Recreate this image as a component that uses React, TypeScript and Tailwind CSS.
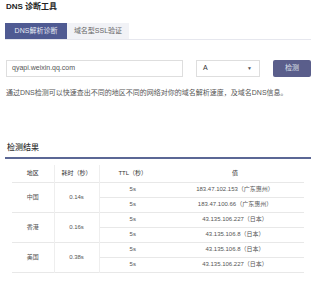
import React from 'react';

type Row = { region: string; time: string; records: { ttl: string; value: string }[] };

const rows: Row[] = [
  {
    region: '中国',
    time: '0.14s',
    records: [
      { ttl: '5s', value: '183.47.102.153（广东惠州）' },
      { ttl: '5s', value: '183.47.100.66（广东惠州）' },
    ],
  },
  {
    region: '香港',
    time: '0.16s',
    records: [
      { ttl: '5s', value: '43.135.106.227（日本）' },
      { ttl: '5s', value: '43.135.106.8（日本）' },
    ],
  },
  {
    region: '美国',
    time: '0.38s',
    records: [
      { ttl: '5s', value: '43.135.106.8（日本）' },
      { ttl: '5s', value: '43.135.106.227（日本）' },
    ],
  },
];

const App: React.FC = () => {
  return (
    <div className="w-[320px] h-[284px] overflow-hidden bg-white pl-[5px] pr-[9px] pt-[2px] font-['Liberation_Sans','Noto_Sans_CJK_SC',sans-serif] text-[#555]">
      {/* Title */}
      <h1 className="h-[10px] pl-[1px] text-[8px] font-bold leading-[10px] text-[#222]">DNS 诊断工具</h1>

      {/* Tabs */}
      <div className="mt-[11px] flex border-b border-[#e6e7ee]">
        <div className="flex h-[16px] w-[62px] items-center justify-center bg-[#4f5a92] text-[7px] text-[#e8eaf4]">
          DNS解析诊断
        </div>
        <div className="flex h-[16px] w-[62px] items-center justify-center bg-[#f1f2f6] text-[7px] text-[#666]">
          域名型SSL验证
        </div>
      </div>

      {/* Query form */}
      <div className="mt-[20px] flex h-[17px] items-stretch">
        <div className="ml-[1px] flex w-[177px] items-center border border-[#dedede] pl-[5px] text-[7px] text-[#555]">
          qyapi.weixin.qq.com
        </div>
        <div className="ml-[13px] flex w-[64px] items-center justify-between border border-[#dedede] pl-[6px] pr-[7px] text-[7px] text-[#333]">
          <span>A</span>
          <span className="text-[5px] text-[#555]">▼</span>
        </div>
        <button className="ml-[13px] flex w-[38px] items-center justify-center rounded-[2px] bg-[#5a5e8b] text-[7px] text-[#dfe1ee]">
          检测
        </button>
      </div>

      <p className="mt-[11px] pl-[1px] text-[7px] leading-[10px] text-[#555]">
        通过DNS检测可以快速查出不同的地区不同的网络对你的域名解析速度，及域名DNS信息。
      </p>

      {/* Results */}
      <h2 className="mt-[45px] h-[10px] pl-[2px] text-[8px] font-medium leading-[10px] text-[#333]">检测结果</h2>
      <div className="mt-[4px] h-[2px] bg-[#5b6795]" />

      <table className="ml-[7px] mt-[6px] w-[292px] table-fixed border-collapse text-center text-[6px] text-[#555]">
        <colgroup>
          <col className="w-[42px]" />
          <col className="w-[45px]" />
          <col className="w-[67px]" />
          <col />
        </colgroup>
        <thead>
          <tr className="h-[17px] border-b border-[#e8e8e8] text-[#333]">
            <th className="border-r border-[#eeeeee] font-normal">地区</th>
            <th className="border-r border-[#eeeeee] font-normal">耗时（秒）</th>
            <th className="font-normal">TTL（秒）</th>
            <th className="font-normal">值</th>
          </tr>
        </thead>
        <tbody>
          {rows.map((row) =>
            row.records.map((rec, i) => (
              <tr key={row.region + i} className="h-[15px] border-b border-[#e8e8e8]">
                {i === 0 && (
                  <>
                    <td rowSpan={row.records.length} className="border-r border-[#eeeeee]">
                      {row.region}
                    </td>
                    <td rowSpan={row.records.length} className="border-r border-[#eeeeee]">
                      {row.time}
                    </td>
                  </>
                )}
                <td>{rec.ttl}</td>
                <td>{rec.value}</td>
              </tr>
            ))
          )}
        </tbody>
      </table>
    </div>
  );
};

export default App;
